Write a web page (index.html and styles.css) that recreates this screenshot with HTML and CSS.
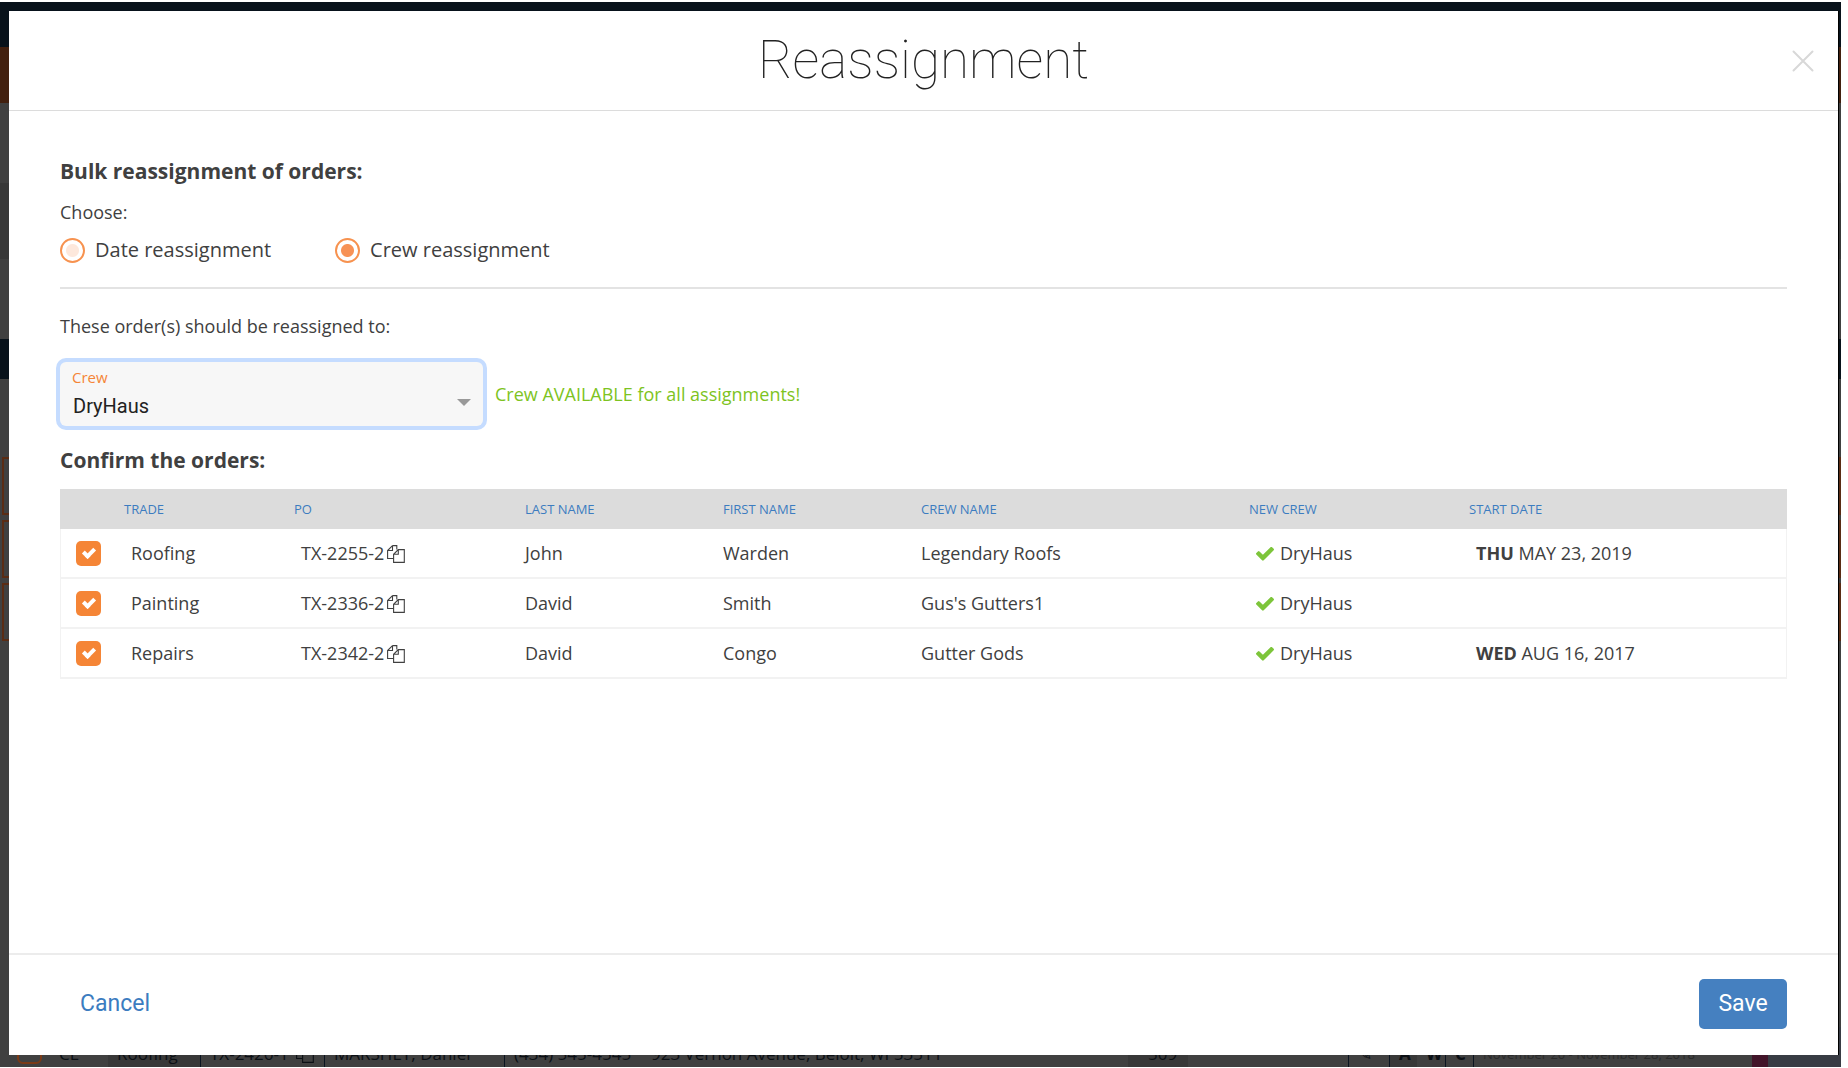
FILE: index.html
```html
<!DOCTYPE html>
<html lang="en">
<head>
  <meta charset="UTF-8" />
  <meta name="viewport" content="width=device-width, initial-scale=1" />
  <title>Reassignment</title>
  <link rel="stylesheet" href="styles.css">
</head>
<body>
  <svg class="sprite" aria-hidden="true">
    <symbol id="icon-copy" viewBox="0 0 18 18">
      <path d="M5.5.6h4.3v4M5.5.6.6 5.5v8H6.5M5.5.6v4.9H.6M11.3 4.6h6v12.8H6.6V9.3z M11.3 4.6v4.7H6.6" fill="none" stroke="currentColor" stroke-width="1.1" />
    </symbol>
    <symbol id="icon-check" viewBox="121 374 1550 1148">
      <path d="M1671 566q0 40-28 68l-724 724-136 136q-28 28-68 28t-68-28l-136-136-362-362q-28-28-28-68t28-68l136-136q28-28 68-28t68 28l294 295 656-657q28-28 68-28t68 28l136 136q28 28 28 68z" fill="currentColor" />
    </symbol>
  </svg>

  <div class="page" aria-hidden="true" inert>
    <div class="navbar"></div>
    <div class="toolbar"></div>
    <div class="gap"></div>
    <div class="filters"></div>
    <div class="gap"></div>
    <div class="list-header"></div>
    <div class="cards">
      <div class="card"></div>
      <div class="card"></div>
      <div class="card"></div>
    </div>
    <div class="list-row">
      <span class="tick"></span>
      <span>CL</span>
      <span class="shade">Roofing</span>
      <span class="line">TX-2426-1 <svg class="copy"><use href="#icon-copy" /></svg></span>
      <span class="line">MARSHEY, Daniel</span>
      <span class="line">(434) 545-4545</span>
      <span>923 Vernon Avenue, Beloit, WI 53511</span>
      <span class="shade count">509</span>
      <span></span>
      <span class="line">✎</span>
      <span class="line shade"><b>A</b></span>
      <span><b>W</b></span>
      <span class="line"><b>C</b></span>
      <span class="line dates">November 20 - November 28, 2018</span>
      <span class="status"></span>
      <span class="last"></span>
    </div>
  </div>

  <form class="modal" role="dialog" aria-labelledby="title">
    <header class="modal-header">
      <h1 id="title">Reassignment</h1>
      <button type="button" class="close" aria-label="Close">
        <svg viewBox="0 0 22 22"><path d="M1.5 1.5l19 19M20.5 1.5l-19 19" stroke="currentColor" stroke-width="2" stroke-linecap="round" /></svg>
      </button>
    </header>

    <main class="modal-body">
      <h2>Bulk reassignment of orders:</h2>
      <p class="choose">Choose:</p>
      <div class="radios">
        <label><input type="radio" name="kind" value="date" />Date reassignment</label>
        <label><input type="radio" name="kind" value="crew" checked />Crew reassignment</label>
      </div>

      <p class="assign-to">These order(s) should be reassigned to:</p>
      <div class="crew-row">
        <div class="crew-field">
          <label for="crew">Crew</label>
          <select id="crew">
            <option>DryHaus</option>
          </select>
        </div>
        <span class="available">Crew AVAILABLE for all assignments!</span>
      </div>

      <h2>Confirm the orders:</h2>
      <table>
        <colgroup>
          <col class="c-check"><col class="c-trade"><col class="c-po"><col class="c-name"><col class="c-name"><col class="c-crew"><col class="c-new"><col>
        </colgroup>
        <thead>
          <tr>
            <th></th>
            <th>TRADE</th>
            <th>PO</th>
            <th>LAST NAME</th>
            <th>FIRST NAME</th>
            <th>CREW NAME</th>
            <th>NEW CREW</th>
            <th>START DATE</th>
          </tr>
        </thead>
        <tbody>
          <tr>
            <td class="check"><input type="checkbox" aria-label="Roofing TX-2255-2" checked /></td>
            <td class="inset">Roofing</td>
            <td class="inset">TX-2255-2<svg class="copy"><use href="#icon-copy" /></svg></td>
            <td>John</td>
            <td>Warden</td>
            <td>Legendary Roofs</td>
            <td class="inset"><svg class="ok"><use href="#icon-check" /></svg>DryHaus</td>
            <td class="inset"><b>THU</b> MAY 23, 2019</td>
          </tr>
          <tr>
            <td class="check"><input type="checkbox" aria-label="Painting TX-2336-2" checked /></td>
            <td class="inset">Painting</td>
            <td class="inset">TX-2336-2<svg class="copy"><use href="#icon-copy" /></svg></td>
            <td>David</td>
            <td>Smith</td>
            <td>Gus's Gutters1</td>
            <td class="inset"><svg class="ok"><use href="#icon-check" /></svg>DryHaus</td>
            <td></td>
          </tr>
          <tr>
            <td class="check"><input type="checkbox" aria-label="Repairs TX-2342-2" checked /></td>
            <td class="inset">Repairs</td>
            <td class="inset">TX-2342-2<svg class="copy"><use href="#icon-copy" /></svg></td>
            <td>David</td>
            <td>Congo</td>
            <td>Gutter Gods</td>
            <td class="inset"><svg class="ok"><use href="#icon-check" /></svg>DryHaus</td>
            <td class="inset"><b>WED</b> AUG 16, 2017</td>
          </tr>
        </tbody>
      </table>
    </main>

    <footer class="modal-footer">
      <button type="button" class="cancel">Cancel</button>
      <button type="submit" class="save">Save</button>
    </footer>
  </form>
</body>
</html>
```
FILE: styles.css
```css
* {
  box-sizing: border-box;
}
body {
  margin: 0;
  padding: 2px 7px 1px 0;
  height: 100vh;
  display: grid;
  grid-template: minmax(0, 1fr) / minmax(0, 1fr);
  background: #fff;
  color: #404040;
  font-family: "Open Sans", sans-serif;
  font-size: 18px;
}
.sprite {
  position: absolute;
  width: 0;
  height: 0;
}

/* dimmed order list behind the dialog */
.page {
  grid-area: 1 / 1;
  display: flex;
  flex-direction: column;
  overflow: hidden;
  background: #404040;
}
.navbar {
  height: 45px;
  background: #08121b;
}
.toolbar {
  height: 56px;
  background: #42200f;
}
.gap {
  height: 80px;
}
.filters {
  height: 76px;
  background: #383838;
}
.list-header {
  height: 40px;
  background: #08121b;
}
.cards {
  display: flex;
  flex-direction: column;
  gap: 5px;
  flex: 1;
  padding: 78px 0 0 2px;
}
.card {
  height: 58px;
  border: 2px solid #5a2c14;
}
.list-row {
  display: grid;
  grid-template-columns: 50px 58px 92px 124px 180px 138px 486px 60px 160px 41px 28px 28px 28px 279px 16px 1fr;
  height: 40px;
  line-height: 54px;
  font-size: 17px;
  color: #0b0f14;
  white-space: nowrap;
}
.list-row span {
  padding-left: 9px;
  overflow: hidden;
}
.list-row .line {
  border-left: 1px solid #0a1420;
}
.list-row .shade {
  background: #383838;
}
.list-row .count {
  padding-left: 20px;
}
.list-row .tick {
  width: 25px;
  height: 25px;
  margin: 12px 0 0 17px;
  border: 2px solid #7a3a17;
  border-radius: 6px;
}
.list-row .dates {
  color: #2a2a2a;
  font-size: 13px;
}
.list-row .status {
  background: #42152a;
}
.list-row .last {
  background: #383c44;
}

.modal {
  grid-area: 1 / 1;
  z-index: 1;
  display: flex;
  flex-direction: column;
  margin: 9px 3px 12px 9px;
  background: #fff;
  box-shadow: 1px 0 0 #000;
}
.modal-header {
  position: relative;
  height: 100px;
  border-bottom: 1px solid #dcdcdc;
}
h1 {
  margin: 0;
  text-align: center;
  font: 100 53px/98px Roboto, sans-serif;
  color: #222;
}
button {
  border: 0;
  padding: 0;
  background: none;
  font: 23px/50px Roboto, sans-serif;
  cursor: pointer;
}
.close {
  position: absolute;
  top: 39px;
  right: 24px;
  width: 22px;
  height: 22px;
  color: #d8d8d8;
}
.close svg {
  display: block;
}
.modal-body {
  flex: 1;
  padding: 45px 51px 0;
}
h2 {
  margin: 0;
  font-size: 21px;
  line-height: 30px;
}
p {
  margin: 0;
}
.choose {
  margin-top: 14px;
  line-height: 24px;
}
.radios {
  display: flex;
  gap: 64px;
  padding: 13px 0 24px;
  border-bottom: 2px solid #e3e3e3;
  font-size: 20px;
  line-height: 26px;
}
.radios label {
  display: flex;
  align-items: center;
  gap: 10px;
}
.radios input {
  appearance: none;
  width: 25px;
  height: 25px;
  margin: 0;
  border: 2px solid #f7924f;
  border-radius: 50%;
  background: radial-gradient(circle, #fde8dc 6px, #fff 7px);
}
.radios input:checked {
  background: radial-gradient(circle, #f79256 6px, #fff 7px);
}
.assign-to {
  margin-top: 24px;
  line-height: 26px;
}
.crew-row {
  display: flex;
  align-items: center;
  gap: 12px;
  margin: 23px 0 19px;
}
.crew-field {
  position: relative;
  width: 423px;
}
.crew-field label {
  position: absolute;
  top: 5px;
  left: 12px;
  font-size: 15px;
  line-height: 20px;
  color: #f58536;
}
.crew-field select {
  appearance: none;
  display: block;
  width: 100%;
  height: 64px;
  padding: 24px 12px 0 13px;
  border: 0;
  border-radius: 6px;
  outline: 0;
  box-shadow: 0 0 0 4px #c5dcff;
  background: #f7f7f7;
  color: #222;
  font: 20px Roboto, sans-serif;
}
/* dropdown arrow */
.crew-field::after {
  content: "";
  position: absolute;
  right: 12px;
  top: 37px;
  border: 7px solid transparent;
  border-top-color: #999;
  border-bottom: 0;
}
.available {
  color: #7dc322;
}

table {
  width: 100%;
  margin-top: 14px;
  table-layout: fixed;
  border-collapse: separate;
  border-spacing: 0;
}
.c-check { width: 64px; }
.c-trade { width: 170px; }
.c-po { width: 231px; }
.c-name { width: 198px; }
.c-crew { width: 328px; }
.c-new { width: 220px; }
th {
  height: 40px;
  padding: 0;
  background: #dcdcdc;
  color: #3c7cc0;
  font-size: 13px;
  font-weight: 400;
  text-align: left;
}
td {
  height: 50px;
  padding: 0;
  border-bottom: 2px solid #f2f2f2;
}
td:first-child {
  border-left: 1px solid #f2f2f2;
}
td:last-child {
  border-right: 1px solid #f2f2f2;
}
.inset {
  padding-left: 7px;
}
.check {
  padding-left: 15px;
}
.check input {
  appearance: none;
  display: block;
  width: 25px;
  height: 25px;
  margin: 0;
  border-radius: 5px;
  background: #f58536;
}
/* white tick */
.check input:checked::before {
  content: "";
  display: block;
  width: 4px;
  height: 8px;
  margin: 5px 0 0 9px;
  border: solid #fff;
  border-width: 0 4px 4px 0;
  transform: rotate(45deg);
}
.copy {
  width: 18px;
  height: 18px;
  margin-left: 3px;
  vertical-align: -3px;
}
.ok {
  width: 18px;
  height: 14px;
  margin-right: 6px;
  vertical-align: -1px;
  color: #7dc53a;
}

.modal-footer {
  display: flex;
  justify-content: space-between;
  align-items: center;
  height: 102px;
  padding: 0 51px 2px 71px;
  border-top: 2px solid #ececec;
}
.cancel {
  color: #3c7cc0;
}
.save {
  width: 88px;
  height: 50px;
  border-radius: 5px;
  background: #4580c0;
  color: #fff;
}
```
